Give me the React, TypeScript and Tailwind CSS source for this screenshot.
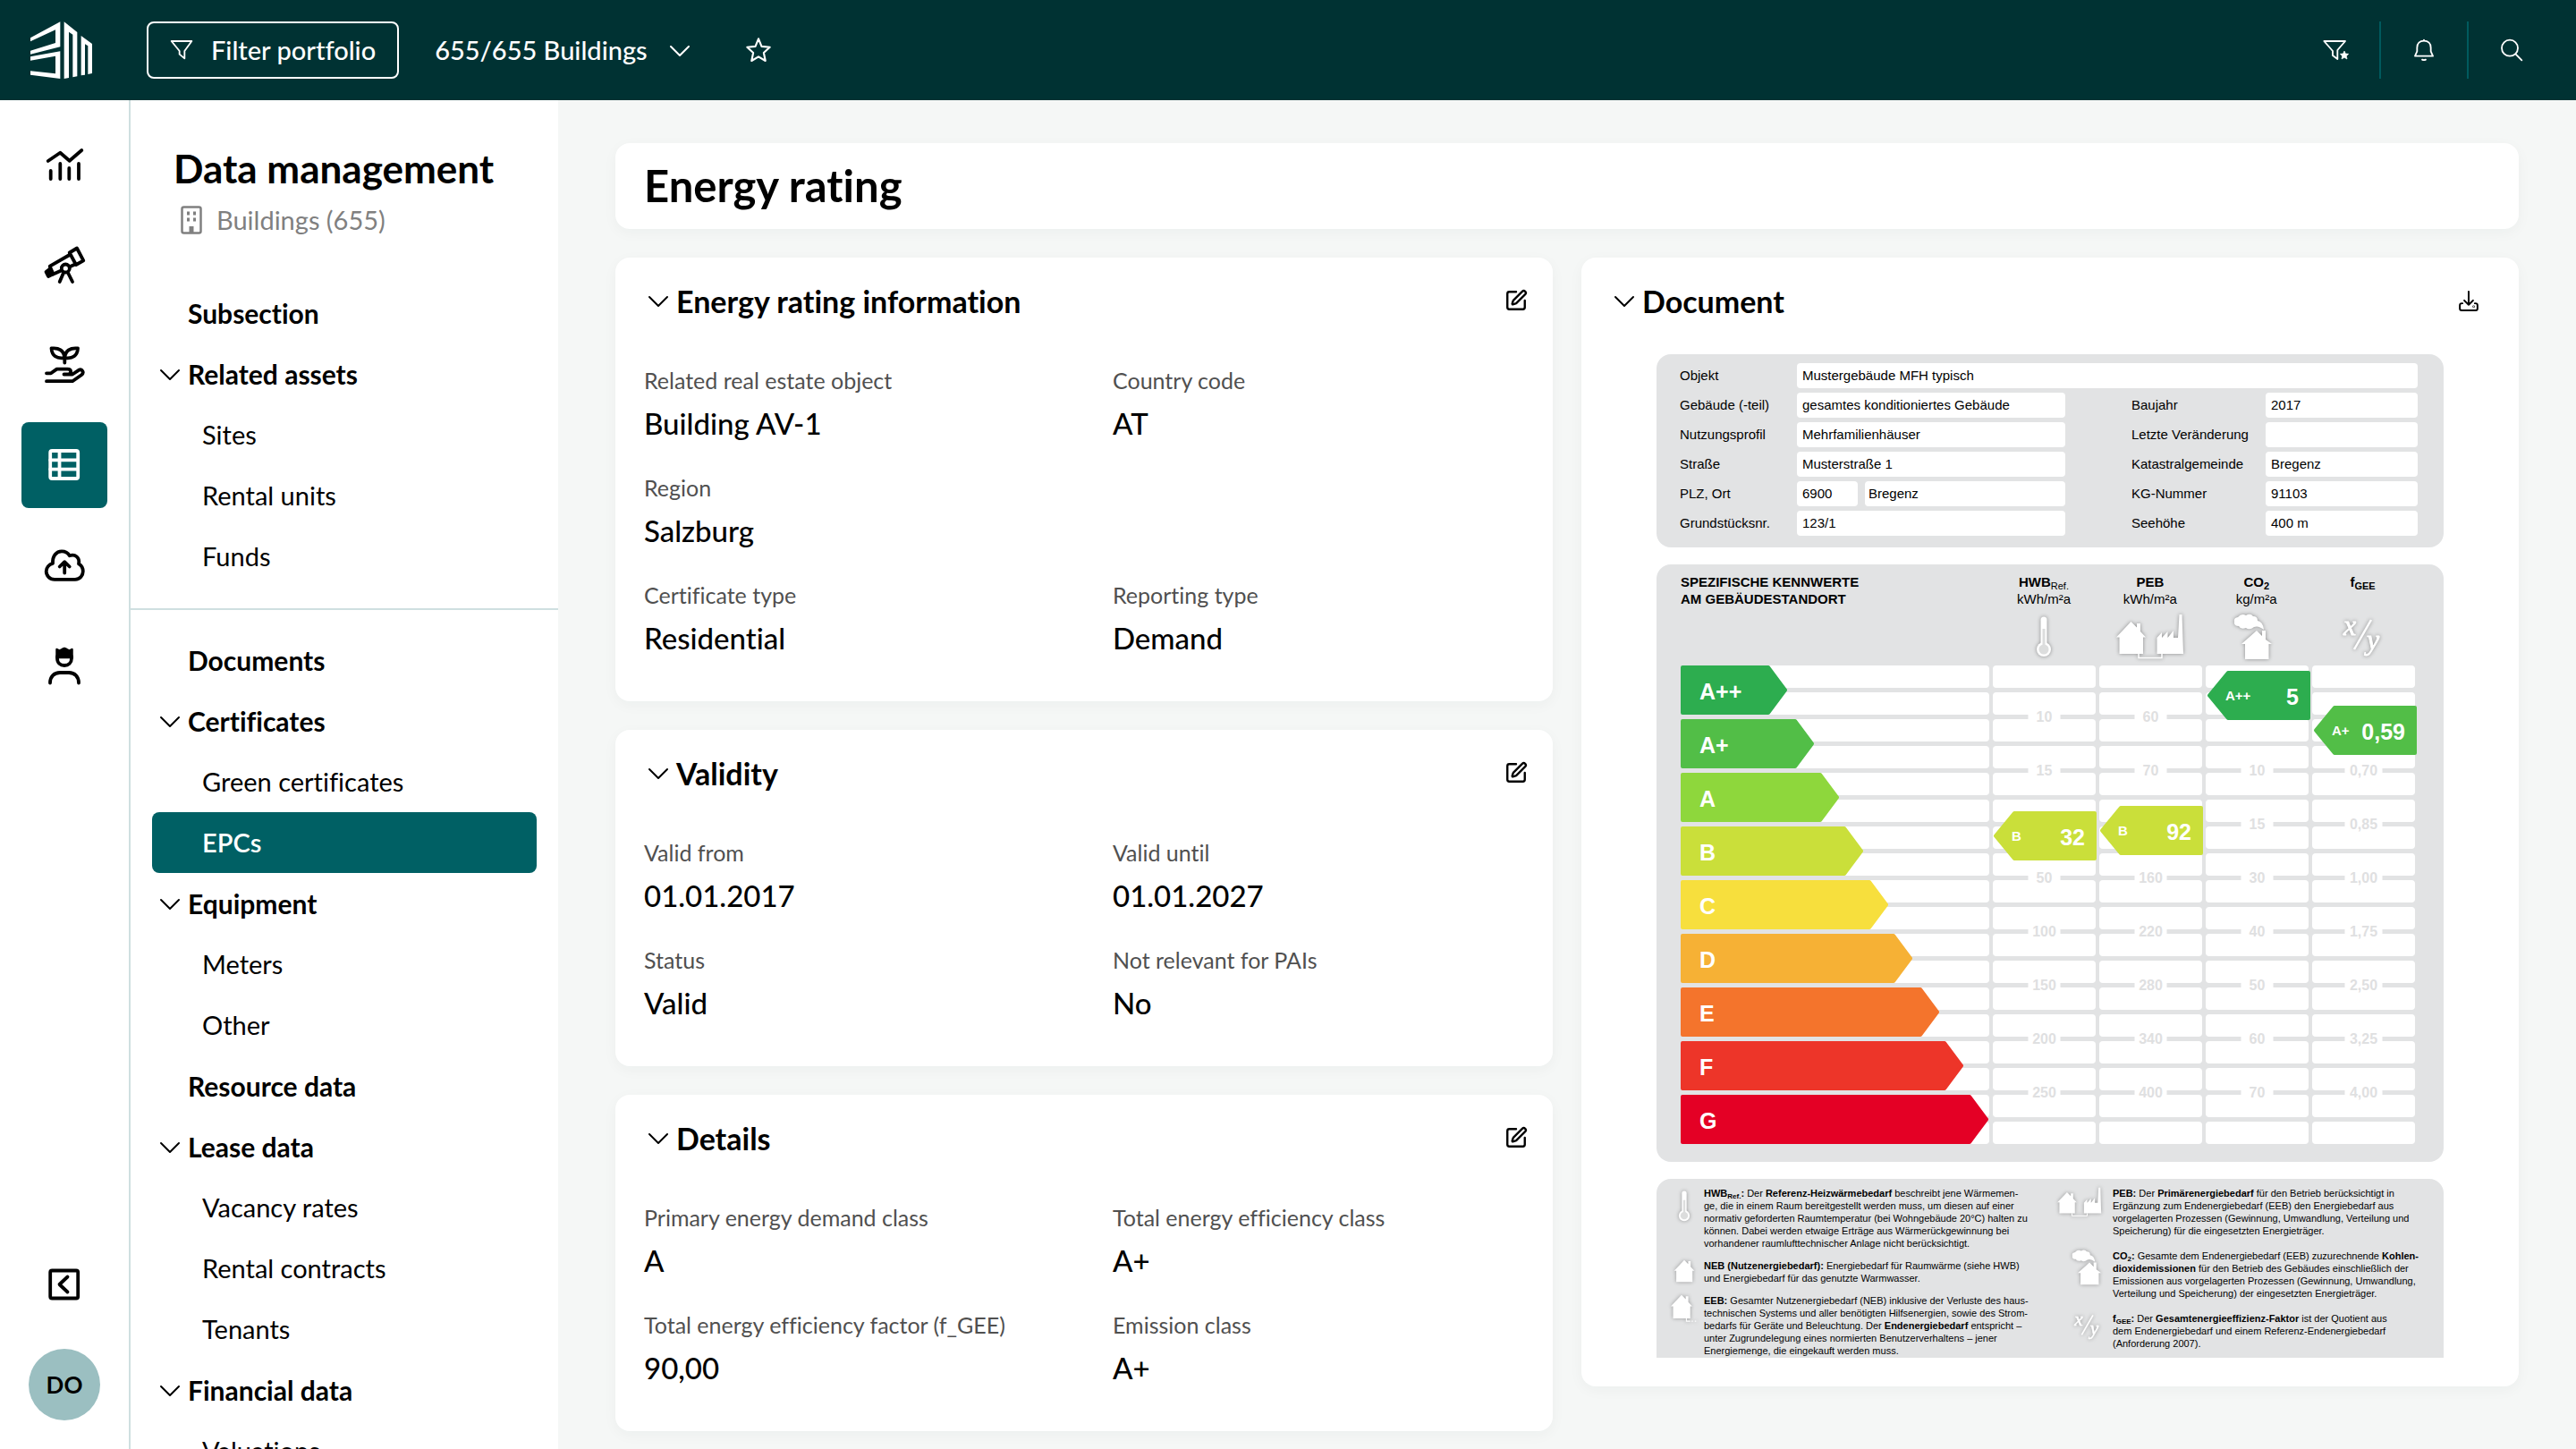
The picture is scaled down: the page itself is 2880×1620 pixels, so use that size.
import type { ReactNode } from "react";
import clsx from "clsx";
import { SquarePen } from "lucide-react";

/* ---------- icons ---------- */

const Chevron = ({ className }: { className?: string }) => (
  <svg
    viewBox="0 0 24 24"
    className={clsx("size-6 shrink-0", className)}
    fill="none"
    stroke="currentColor"
    strokeWidth="2"
    strokeLinecap="round"
    strokeLinejoin="round"
    aria-hidden="true"
  >
    <path d="M2 8l10 10 10-10" />
  </svg>
);

const Logo = () => (
  <svg viewBox="42 40 207 192" className="h-16 w-[69px]" fill="white" role="img" aria-label="Home">
    <path d="M42 95L142 41V125L42 150V138L126 112V68L42 107Z" />
    <path d="M42 158L142 140V232L42 219V206L126 215V156L42 171Z" />
    <path d="M155 41L199 76V224L184 227V84L171 75V229L155 232Z" />
    <path d="M212 88L249 115V214L235 217V122L225 116V219L212 221Z" />
  </svg>
);

const FunnelIcon = () => (
  <svg viewBox="513 105 78 78" className="size-[26px]" fill="none" stroke="currentColor" strokeWidth="5.5" strokeLinejoin="round" aria-hidden="true">
    <path d="M518 114H586L562 147V172L545 158V147Z" />
  </svg>
);

const StarIcon = () => (
  <svg viewBox="0 0 24 24" className="size-8" fill="none" stroke="currentColor" strokeWidth="1.6" strokeLinejoin="round" aria-hidden="true">
    <path d="M12 2.5l2.6 6.4 6.9.7-5.1 4.6 1.4 6.8L12 17.5 6.2 21l1.4-6.800L2.500 9.600l6.900-.7z" />
  </svg>
);

const FunnelStarIcon = () => (
  <svg viewBox="108 126 96 84" className="h-7 w-8" fill="none" stroke="currentColor" strokeWidth="5.5" strokeLinejoin="round" aria-hidden="true">
    <path d="M115 138H186L160 168V198L144 186V171Z" />
    <path d="M183 171l4 9 10 1-7 7 2 10-9-5-9 5 2-10-7-7 10-1z" fill="currentColor" strokeWidth="2" />
  </svg>
);

const BellIcon = () => (
  <svg viewBox="408 126 84 84" className="size-7" fill="none" stroke="currentColor" strokeWidth="5.5" strokeLinecap="round" strokeLinejoin="round" aria-hidden="true">
    <path d="M420 188H480L473 172V160C473 146 464 137 450 137S427 146 427 160V172Z" />
    <path d="M450 134v2M444 200q6 3 12 0" />
  </svg>
);

const SearchIcon = () => (
  <svg viewBox="702 126 84 84" className="size-7" fill="none" stroke="currentColor" strokeWidth="5.5" strokeLinecap="round" aria-hidden="true">
    <circle cx="738" cy="161" r="27" />
    <path d="M758 182l20 20" />
  </svg>
);

const DownloadIcon = () => (
  <svg viewBox="564 968 72 76" className="h-[25px] w-6" fill="none" stroke="currentColor" strokeWidth="6" strokeLinecap="round" strokeLinejoin="round" aria-hidden="true">
    <path d="M600 974V1019M585 1004L600 1019L615 1004" />
    <path d="M579 1014H577Q570 1014 570 1021V1032Q570 1038 576 1038H624Q630 1038 630 1032V1021Q630 1014 623 1014H621" />
    <circle cx="617" cy="1025" r="1" />
  </svg>
);

const BuildingIcon = () => (
  <svg viewBox="0 0 24 32" className="h-8 w-6" fill="none" stroke="currentColor" strokeWidth="2.5" aria-hidden="true">
    <rect x="1.5" y="1.5" width="21" height="29" rx="2" />
    <path d="M7 8.5h3M14 8.5h3M7 15.5h3M14 15.5h3" strokeWidth="4" />
    <path d="M12 23v7" strokeWidth="5" />
  </svg>
);

const RailSvg = ({ children }: { children: ReactNode }) => (
  <svg viewBox="0 0 48 48" className="size-12" fill="none" stroke="currentColor" strokeWidth="3.8" strokeLinecap="round" strokeLinejoin="round" aria-hidden="true">
    {children}
  </svg>
);

const railItems = [
  {
    label: "Analytics",
    icon: <path d="M5.7 20L19.3 10.7 29.7 19.7 43.3 8M8.7 31v9M19.3 23v17M29.3 28v12M40 23v17" />,
  },
  {
    label: "Explore",
    icon: (
      <>
        <path d="M29.7 10.5L38 5.5 45.3 19.3 37 24ZM29.7 13L7.7 25.7 11.5 34.5 36 23.5" />
        <path d="M3.5 32L8 28.5 11 34.5 6 37Z" fill="currentColor" />
        <path d="M23 33l-4.3 10M28 33l5 10" />
        <circle cx="25.3" cy="28" r="4.5" fill="white" />
      </>
    ),
  },
  {
    label: "Sustainability",
    icon: (
      <>
        <path d="M24.3 16C15 17.5 10 13.5 9.5 5.5 18 4.5 23.5 8 24.3 16ZM24.3 16C33.5 17.5 38.5 13.5 39 5.5 30.5 4.5 25 8 24.3 16ZM24.3 16v5.5" />
        <path d="M4 33.3H9L15.5 28.6H27.5C32.5 28.6 32 34.5 28 34.5H23.5H33L40 29.8C44 28 46.5 32.5 43 35.2L33 42.2H4" />
      </>
    ),
  },
  {
    label: "Data management",
    active: true,
    icon: (
      <>
        <rect x="8.2" y="8" width="31" height="31" rx="2" />
        <path d="M18.5 8v31M8.2 18.3h31M8.2 28.6h31" />
      </>
    ),
  },
  {
    label: "Upload",
    icon: (
      <>
        <path d="M13 39.8C7.5 39.8 3.7 35.5 3.7 30.8 3.7 26.5 6.8 23 11 21.8 10.5 13.5 15 8.4 21 8.4 25 8.4 28 10.2 29.8 13.2 36 11 41.5 15.5 40 22.3 43 24 44.8 27 44.8 30.8 44.8 35.5 41.5 39.8 36 39.8Z" />
        <path d="M24.2 32.5V20.5M18.7 25.5L24.2 20.2 29.7 25.5" />
      </>
    ),
  },
  {
    label: "Administration",
    icon: (
      <>
        <path d="M8 43.5C8 36.5 12.5 32 19 32H29C35.5 32 40 36.5 40 43.5" />
        <path d="M16 14V16C16 21 19.5 24 24 24S32 21 32 16V14" />
        <path d="M15.500 6l3 1.500 3-1.500 2.500-1 2.500 1 3 1.500 3-1.500V15H15.500Z" fill="currentColor" strokeWidth="2.5" />
      </>
    ),
  },
];

/* ---------- navigation ---------- */

type NavEntry = { label: string; kind: "plain" | "group" | "child"; active?: boolean };

const relatedNav: NavEntry[] = [
  { label: "Subsection", kind: "plain" },
  { label: "Related assets", kind: "group" },
  { label: "Sites", kind: "child" },
  { label: "Rental units", kind: "child" },
  { label: "Funds", kind: "child" },
];

const dataNav: NavEntry[] = [
  { label: "Documents", kind: "plain" },
  { label: "Certificates", kind: "group" },
  { label: "Green certificates", kind: "child" },
  { label: "EPCs", kind: "child", active: true },
  { label: "Equipment", kind: "group" },
  { label: "Meters", kind: "child" },
  { label: "Other", kind: "child" },
  { label: "Resource data", kind: "plain" },
  { label: "Lease data", kind: "group" },
  { label: "Vacancy rates", kind: "child" },
  { label: "Rental contracts", kind: "child" },
  { label: "Tenants", kind: "child" },
  { label: "Financial data", kind: "group" },
  { label: "Valuations", kind: "child" },
];

const NavList = ({ items }: { items: NavEntry[] }) => (
  <ul className="px-6">
    {items.map((item) => (
      <li key={item.label}>
        {item.kind === "group" ? (
          <button type="button" className="flex h-[68px] w-full items-center gap-2 pl-2 text-left text-[30px] font-bold">
            <Chevron />
            {item.label}
          </button>
        ) : (
          <a
            href="#"
            className={clsx(
              "flex h-[68px] items-center rounded-lg",
              item.kind === "child" ? "pl-14 text-[29px]" : "pl-10 text-[30px] font-bold",
              item.active && "bg-[#006064] font-semibold text-white",
            )}
          >
            {item.label}
          </a>
        )}
      </li>
    ))}
  </ul>
);

const TopBar = () => (
  <header className="flex h-28 shrink-0 items-center bg-[#003233] pr-10 pl-[34px] text-[29px] font-medium text-white">
    <Logo />
    <button type="button" className="ml-[61px] flex h-16 items-center gap-5 rounded-lg border-2 border-white px-6">
      <FunnelIcon />
      Filter portfolio
    </button>
    <button type="button" className="ml-10 flex items-center gap-6">
      655/655 Buildings
      <Chevron />
    </button>
    <button type="button" className="ml-[60px]" aria-label="Favourites">
      <StarIcon />
    </button>
    <div className="ml-auto flex items-center divide-x-2 divide-[#005a5e]">
      <button type="button" className="flex h-16 w-[82px] items-center pl-4" aria-label="Saved filters">
        <FunnelStarIcon />
      </button>
      <button type="button" className="flex h-16 w-[98px] items-center justify-center" aria-label="Notifications">
        <BellIcon />
      </button>
      <button type="button" className="flex h-16 w-20 items-center justify-end pr-[18px]" aria-label="Search">
        <SearchIcon />
      </button>
    </div>
  </header>
);

const Rail = () => (
  <nav className="flex w-[146px] shrink-0 flex-col items-center gap-4 border-r-2 border-[#cfdfe0] bg-white pt-6 pb-8" aria-label="Main">
    {railItems.map((item) => (
      <a
        key={item.label}
        href="#"
        aria-label={item.label}
        className={clsx("flex size-24 items-center justify-center rounded-lg", item.active && "bg-[#006064] text-white")}
      >
        <RailSvg>{item.icon}</RailSvg>
      </a>
    ))}
    <button type="button" className="mt-auto mb-8" aria-label="Collapse menu">
      <RailSvg>
        <rect x="8.2" y="8.5" width="31" height="31" rx="2" />
        <path d="M27.5 15.5L18.5 24 27.5 32.5" />
      </RailSvg>
    </button>
    <button type="button" className="size-20 rounded-full bg-[#9bbfc1] text-[26px] font-bold">
      DO
    </button>
  </nav>
);

const Sidebar = () => (
  <aside className="w-[478px] shrink-0 overflow-hidden bg-white">
    <div className="px-12 pt-12">
      <h2 className="text-[44px] leading-[56px] font-bold">Data management</h2>
      <p className="mt-3 flex items-center gap-4 pl-2 text-[29px] leading-9 text-[#808080]">
        <BuildingIcon />
        Buildings (655)
      </p>
    </div>
    <nav className="mt-[52px]" aria-label="Data management">
      <NavList items={relatedNav} />
      <hr className="mt-6 mb-[22px] border-t-2 border-[#cfdfe0]" />
      <NavList items={dataNav} />
    </nav>
  </aside>
);

/* ---------- cards ---------- */

const Card = ({ title, action, children }: { title: string; action: ReactNode; children: ReactNode }) => (
  <section className="rounded-2xl bg-white pt-6 shadow-[0_4px_16px_rgba(0,40,40,0.04)]">
    <div className="flex h-12 items-center justify-between pr-7 pl-[34px]">
      <button type="button" className="flex items-center gap-2 text-[34px] font-bold">
        <Chevron className="ml-0.5" />
        {title}
      </button>
      {action}
    </div>
    {children}
  </section>
);

const EditButton = () => (
  <button type="button" aria-label="Edit">
    <SquarePen size={26} strokeWidth={2.2} />
  </button>
);

type Field = { label: string; value: string; wide?: boolean };

const FieldCard = ({ title, fields }: { title: string; fields: Field[] }) => (
  <Card title={title} action={<EditButton />}>
    <dl className="grid grid-cols-2 gap-x-16 gap-y-[35px] px-8 pt-12 pb-[51px]">
      {fields.map((field) => (
        <div key={field.label} className={clsx(field.wide && "col-span-2")}>
          <dt className="text-[25px] leading-[34px] text-[#505050]">{field.label}</dt>
          <dd className="mt-[11px] text-[33px] leading-10 font-medium">{field.value}</dd>
        </div>
      ))}
    </dl>
  </Card>
);

/* ---------- certificate document ---------- */

const Thermometer = ({ className }: { className: string }) => (
  <svg viewBox="0 0 18 46" className={className} aria-hidden="true">
    <rect x="5.5" y="0.5" width="7" height="34" rx="3.5" fill="white" />
    <circle cx="9" cy="37" r="8" fill="white" />
    <circle cx="9" cy="37" r="5.5" fill="#dcdddd" />
    <path d="M9 14v22" stroke="#dcdddd" strokeWidth="3" />
  </svg>
);

const House = ({ className }: { className: string }) => (
  <svg viewBox="0 8 33 38" className={className} fill="white" aria-hidden="true">
    <path d="M16.5 9L23 15.5V11H27V20L33 26.5H30V45H3.5V26.5H0Z" />
  </svg>
);

// house with the dotted supply line of delivered energy
const HouseSupply = ({ className }: { className: string }) => (
  <svg viewBox="0 8 40 44" className={className} fill="white" aria-hidden="true">
    <path d="M16.5 9L23 15.5V11H27V20L33 26.5H30V45H3.5V26.5H0Z" />
    <path d="M24 45V49.5H30M32 49.5h2M37 49.5h2" fill="none" stroke="white" strokeWidth="1.5" />
  </svg>
);

const HouseFactory = ({ className }: { className: string }) => (
  <svg viewBox="0 0 76 52" className={className} fill="white" aria-hidden="true">
    <path d="M16.5 9L23 15.5V11H27V20L33 26.5H30V45H3.5V26.5H0Z" />
    <path d="M45.5 45V27L51 21V27L57.5 20V27L64 19V27H69L70.5 1H73.5L75 45Z" />
    <path d="M25 45V49.5H51V45" fill="none" stroke="white" strokeWidth="1.5" />
  </svg>
);

const HouseSmoke = ({ className }: { className: string }) => (
  <svg viewBox="0 0 44 52" className={className} fill="white" aria-hidden="true">
    <path d="M5 4Q9-1 14 2 19-1 22 3 27 3 27 8 33 9 34 18 28 13 23 15 18 19 14 16 8 18 6 14 0 14 1 9 0 5 5 4Z" />
    <path d="M26 19L32 25V19H36V29L43 34H39.500V51H13V34H9Z" />
  </svg>
);

const Ratio = ({ className }: { className: string }) => (
  <svg
    viewBox="0 0 48 48"
    className={clsx("overflow-visible", className)}
    fill="white"
    stroke="white"
    fontFamily="Liberation Serif, serif"
    fontStyle="italic"
    fontSize="32"
    aria-hidden="true"
  >
    <text x="2" y="22" strokeWidth="0.8">x</text>
    <text x="28" y="38" strokeWidth="0.8">y</text>
    <path d="M14 38L33 5" strokeWidth="2.500" />
  </svg>
);

const DocLabel = ({ children, right }: { children: ReactNode; right?: boolean }) => (
  <dt className={clsx("flex h-7 items-center", right ? "col-start-4" : "col-start-1")}>{children}</dt>
);

const docBox = "flex h-7 items-center rounded-sm bg-white px-1.5";

const ObjectPanel = () => (
  <dl className="grid grid-cols-[131px_300fr_74fr_150px_170fr] gap-y-[5px] rounded-2xl bg-[#e2e3e4] pt-2.5 pr-[29px] pb-[13px] pl-[26px] text-[15px]">
    <DocLabel>Objekt</DocLabel>
    <dd className={clsx(docBox, "col-span-4")}>Mustergebäude MFH typisch</dd>
    <DocLabel>Gebäude (-teil)</DocLabel>
    <dd className={docBox}>gesamtes konditioniertes Gebäude</dd>
    <DocLabel right>Baujahr</DocLabel>
    <dd className={docBox}>2017</dd>
    <DocLabel>Nutzungsprofil</DocLabel>
    <dd className={docBox}>Mehrfamilienhäuser</dd>
    <DocLabel right>Letzte Veränderung</DocLabel>
    <dd className={docBox} />
    <DocLabel>Straße</DocLabel>
    <dd className={docBox}>Musterstraße 1</dd>
    <DocLabel right>Katastralgemeinde</DocLabel>
    <dd className={docBox}>Bregenz</dd>
    <DocLabel>PLZ, Ort</DocLabel>
    <dd className="flex gap-2">
      <span className={clsx(docBox, "w-[68px]")}>6900</span>
      <span className="flex h-7 grow items-center rounded-sm bg-white px-1">Bregenz</span>
    </dd>
    <DocLabel right>KG-Nummer</DocLabel>
    <dd className={docBox}>91103</dd>
    <DocLabel>Grundstücksnr.</DocLabel>
    <dd className={docBox}>123/1</dd>
    <DocLabel right>Seehöhe</DocLabel>
    <dd className={docBox}>400 m</dd>
  </dl>
);

const classes = [
  { label: "A++", width: 119, color: "#2dad4f" },
  { label: "A+", width: 149, color: "#52be47" },
  { label: "A", width: 177, color: "#8ed73c" },
  { label: "B", width: 204, color: "#cadf3a" },
  { label: "C", width: 232, color: "#f7df3d" },
  { label: "D", width: 259, color: "#f6b135" },
  { label: "E", width: 289, color: "#f4742c" },
  { label: "F", width: 316, color: "#ed3529" },
  { label: "G", width: 344, color: "#e40025" },
];

// null where the result tag of the column covers the limit
const scales = [
  { x: 349, box: 36, values: ["10", "15", null, "50", "100", "150", "200", "250"] },
  { x: 468, box: 36, values: ["60", "70", null, "160", "220", "280", "340", "400"] },
  { x: 587, box: 36, values: [null, "10", "15", "30", "40", "50", "60", "70"] },
  { x: 706, box: 42, values: [null, "0,70", "0,85", "1,00", "1,75", "2,50", "3,25", "4,00"] },
];

const tags = [
  { x: 350, y: 163, grade: "B", value: "32", color: "#cadf3a" },
  { x: 469, y: 157, grade: "B", value: "92", color: "#cadf3a" },
  { x: 589, y: 6, grade: "A++", value: "5", color: "#2dad4f" },
  { x: 708, y: 45, grade: "A+", value: "0,59", color: "#52be47" },
];

const rows = Array.from({ length: 18 }, (_, i) => i * 30);

const RatingChart = () => (
  <svg viewBox="0 0 824 535" className="w-full" fontFamily="Liberation Sans, Arial, sans-serif" fontWeight="bold" role="img" aria-label="Energy classes">
    {rows.map((y) => (
      <g key={y} fill="white">
        <rect x="0" y={y} width="345" height="25" rx="4" />
        {scales.map((s) => (
          <rect key={s.x} x={s.x} y={y} width="115" height="25" rx="4" />
        ))}
      </g>
    ))}
    {scales.map((s) =>
      s.values.map(
        (value, i) =>
          value && (
            <g key={value}>
              <rect x={s.x + 57.5 - s.box / 2} y={i * 60 + 53} width={s.box} height="9" fill="white" />
              <text x={s.x + 57.5} y={i * 60 + 63} textAnchor="middle" fontSize="16" fill="#dfe0e1">
                {value}
              </text>
            </g>
          ),
      ),
    )}
    {classes.map((c, i) => (
      <g key={c.label}>
        <path
          d={`M2 ${i * 60 + 2}H${c.width - 21}L${c.width - 2} ${i * 60 + 27.5}L${c.width - 21} ${i * 60 + 53}H2Z`}
          fill={c.color}
          stroke={c.color}
          strokeWidth="4"
          strokeLinejoin="round"
        />
        <text x="21" y={i * 60 + 38} fontSize="25" fill="white">
          {c.label}
        </text>
      </g>
    ))}
    {tags.map((t) => (
      <g key={t.x}>
        <path
          d={`M${t.x + 113} ${t.y + 2}H${t.x + 23}L${t.x + 2} ${t.y + 27.5}L${t.x + 23} ${t.y + 53}H${t.x + 113}Z`}
          fill={t.color}
          stroke={t.color}
          strokeWidth="4"
          strokeLinejoin="round"
        />
        <text x={t.x + 20} y={t.y + 33} fontSize="15" fill="white">
          {t.grade}
        </text>
        <text x={t.x + 102} y={t.y + 38} fontSize="25" textAnchor="end" fill="white">
          {t.value}
        </text>
      </g>
    ))}
  </svg>
);

const ColumnHead = ({ name, sub, unit, icon }: { name: string; sub?: ReactNode; unit?: string; icon: ReactNode }) => (
  <div className="flex flex-col items-center">
    <div className="h-[38px] text-center">
      <div className="font-bold">
        {name}
        {sub}
      </div>
      <div>{unit}</div>
    </div>
    <div className="flex h-[65px] items-center drop-shadow-[0_0_2px_rgba(0,0,0,0.4)]">{icon}</div>
  </div>
);

const RatingPanel = () => (
  <div className="rounded-2xl bg-[#e2e3e4] pt-2.5 pr-[29px] pb-5 pl-[27px] text-[15px] leading-[19px]">
    <div className="grid grid-cols-[3fr_1fr_1fr_1fr_1fr] gap-x-1 pr-1">
      <h3 className="font-bold">
        SPEZIFISCHE KENNWERTE
        <br />
        AM GEBÄUDESTANDORT
      </h3>
      <ColumnHead
        name="HWB"
        sub={<sub className="text-[11px] leading-none font-normal">Ref.</sub>}
        unit="kWh/m²a"
        icon={<Thermometer className="h-[46px] w-[18px]" />}
      />
      <ColumnHead name="PEB" unit="kWh/m²a" icon={<HouseFactory className="h-[52px] w-[76px]" />} />
      <ColumnHead
        name="CO"
        sub={<sub className="text-[11px] leading-none">2</sub>}
        unit="kg/m²a"
        icon={<HouseSmoke className="mr-2 h-[52px] w-11" />}
      />
      <ColumnHead name="f" sub={<sub className="text-[11px] leading-none">GEE</sub>} icon={<Ratio className="size-12" />} />
    </div>
    <RatingChart />
  </div>
);

const Note = ({ icon, children }: { icon: ReactNode; children: ReactNode }) => (
  <div className="flex">
    {icon}
    <p className="whitespace-nowrap">{children}</p>
  </div>
);

const LeftIcon = ({ children }: { children: ReactNode }) => (
  <div className="mr-2 flex h-0 w-[29px] shrink-0 items-start justify-center drop-shadow-[0_0_2px_rgba(0,0,0,0.35)]">{children}</div>
);

const RightIcon = ({ children }: { children: ReactNode }) => (
  <div className="mr-3 flex h-0 w-[50px] shrink-0 items-start justify-end drop-shadow-[0_0_2px_rgba(0,0,0,0.35)]">{children}</div>
);

const NotesPanel = () => (
  <div className="grid h-[200px] grid-cols-2 overflow-hidden rounded-t-2xl bg-[#e2e3e4] pt-[9px] pl-4 text-[11px] leading-[14px]">
    <div className="flex flex-col gap-[11px]">
      <Note icon={<LeftIcon><Thermometer className="mt-1 h-[35px] w-[14px]" /></LeftIcon>}>
        <b>HWB<sub className="text-[8px] leading-none">Ref.</sub>:</b> Der <b>Referenz-Heizwärmebedarf</b> beschreibt jene Wärmemen-
        <br />
        ge, die in einem Raum bereitgestellt werden muss, um diesen auf einer
        <br />
        normativ geforderten Raumtemperatur (bei Wohngebäude 20°C) halten zu
        <br />
        können. Dabei werden etwaige Erträge aus Wärmerückgewinnung bei
        <br />
        vorhandener raumlufttechnischer Anlage nicht berücksichtigt.
      </Note>
      <Note icon={<LeftIcon><House className="h-[26px] w-6" /></LeftIcon>}>
        <b>NEB (Nutzenergiebedarf):</b> Energiebedarf für Raumwärme (siehe HWB)
        <br />
        und Energiebedarf für das genutzte Warmwasser.
      </Note>
      <Note icon={<LeftIcon><HouseSupply className="h-8 w-[29px]" /></LeftIcon>}>
        <b>EEB:</b> Gesamter Nutzenergiebedarf (NEB) inklusive der Verluste des haus-
        <br />
        technischen Systems und aller benötigten Hilfsenergien, sowie des Strom-
        <br />
        bedarfs für Geräte und Beleuchtung. Der <b>Endenergiebedarf</b> entspricht –
        <br />
        unter Zugrundelegung eines normierten Benutzerverhaltens – jener
        <br />
        Energiemenge, die eingekauft werden muss.
      </Note>
    </div>
    <div className="flex flex-col gap-3.5">
      <Note icon={<RightIcon><HouseFactory className="h-[34px] w-[50px]" /></RightIcon>}>
        <b>PEB:</b> Der <b>Primärenergiebedarf</b> für den Betrieb berücksichtigt in
        <br />
        Ergänzung zum Endenergiebedarf (EEB) den Energiebedarf aus
        <br />
        vorgelagerten Prozessen (Gewinnung, Umwandlung, Verteilung und
        <br />
        Speicherung) für die eingesetzten Energieträger.
      </Note>
      <Note icon={<RightIcon><HouseSmoke className="h-10 w-[34px]" /></RightIcon>}>
        <b>CO<sub className="text-[8px] leading-none">2</sub>:</b> Gesamte dem Endenergiebedarf (EEB) zuzurechnende <b>Kohlen-</b>
        <br />
        <b>dioxidemissionen</b> für den Betrieb des Gebäudes einschließlich der
        <br />
        Emissionen aus vorgelagerten Prozessen (Gewinnung, Umwandlung,
        <br />
        Verteilung und Speicherung) der eingesetzten Energieträger.
      </Note>
      <Note icon={<RightIcon><Ratio className="size-8" /></RightIcon>}>
        <b>f<sub className="text-[8px] leading-none">GEE</sub>:</b> Der <b>Gesamtenergieeffizienz-Faktor</b> ist der Quotient aus
        <br />
        dem Endenergiebedarf und einem Referenz-Endenergiebedarf
        <br />
        (Anforderung 2007).
      </Note>
    </div>
  </div>
);

const DocumentCard = () => (
  <Card
    title="Document"
    action={
      <button type="button" className="px-4" aria-label="Download">
        <DownloadIcon />
      </button>
    }
  >
    <div className="flex flex-col gap-[19px] px-[84px] pt-9 pb-8 font-['Liberation_Sans',Arial,sans-serif]">
      <ObjectPanel />
      <RatingPanel />
      <NotesPanel />
    </div>
  </Card>
);

const App = () => {
  return (
    <div className="flex h-screen flex-col overflow-hidden font-[Lato,sans-serif] text-black [font-variant-ligatures:no-common-ligatures]">
      <TopBar />
      <div className="flex min-h-0 grow">
        <Rail />
        <Sidebar />
        <main className="grow overflow-hidden bg-[#f5f7f6] px-16 pt-12">
          <div className="flex h-24 items-center rounded-2xl bg-white px-8 shadow-[0_4px_16px_rgba(0,40,40,0.04)]">
            <h1 className="text-[49px] font-bold">Energy rating</h1>
          </div>
          <div className="mt-8 grid grid-cols-2 items-start gap-8">
            <div className="flex flex-col gap-8">
              <FieldCard
                title="Energy rating information"
                fields={[
                  { label: "Related real estate object", value: "Building AV-1" },
                  { label: "Country code", value: "AT" },
                  { label: "Region", value: "Salzburg", wide: true },
                  { label: "Certificate type", value: "Residential" },
                  { label: "Reporting type", value: "Demand" },
                ]}
              />
              <FieldCard
                title="Validity"
                fields={[
                  { label: "Valid from", value: "01.01.2017" },
                  { label: "Valid until", value: "01.01.2027" },
                  { label: "Status", value: "Valid" },
                  { label: "Not relevant for PAIs", value: "No" },
                ]}
              />
              <FieldCard
                title="Details"
                fields={[
                  { label: "Primary energy demand class", value: "A" },
                  { label: "Total energy efficiency class", value: "A+" },
                  { label: "Total energy efficiency factor (f_GEE)", value: "90,00" },
                  { label: "Emission class", value: "A+" },
                ]}
              />
            </div>
            <DocumentCard />
          </div>
        </main>
      </div>
    </div>
  );
};

export default App;
